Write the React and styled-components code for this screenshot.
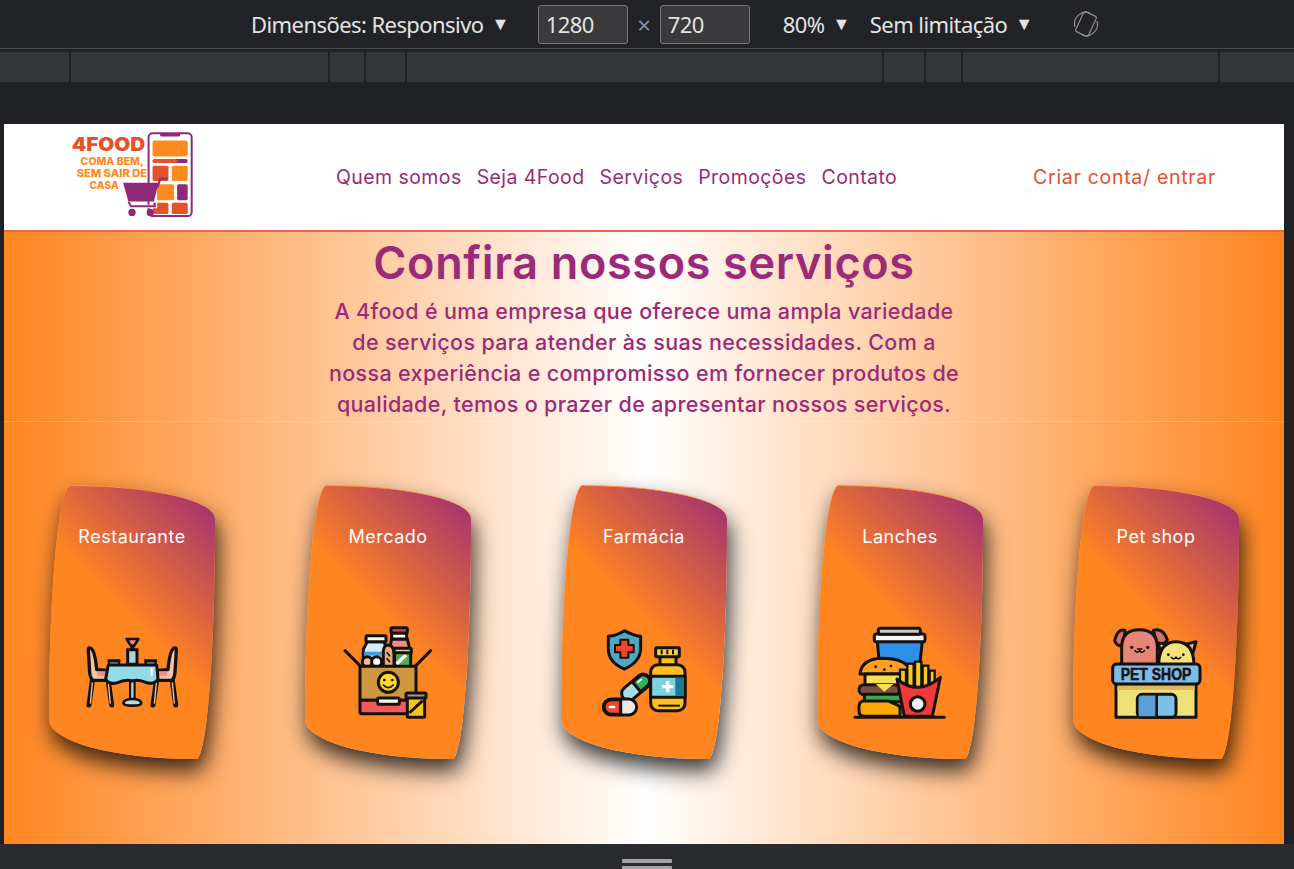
import React from "react";
import styled, { createGlobalStyle } from "styled-components";

const purple = "#9b2a78";
const red = "#e4512b";
const orange = "#ff8520";
const ink = "#14110f";

const GlobalStyle = createGlobalStyle`
  html, body {
    margin: 0;
    padding: 0;
    background: #202124;
    overflow: hidden;
  }
`;

const Screen = styled.div`
  width: 1294px;
  height: 869px;
  overflow: hidden;
  display: flex;
  flex-direction: column;
  background: #202124;
  font-family: "Inter", "Liberation Sans", sans-serif;
`;

const Toolbar = styled.div`
  height: 49px;
  display: flex;
  align-items: center;
  padding-left: 251px;
  box-sizing: border-box;
  background: #222326;
  border-bottom: 1px solid #4a4b50;
  font-family: "Noto Sans", "Open Sans", sans-serif;
  font-size: 22px;
  letter-spacing: -0.57px;
  color: #e3e3e3;
  flex: none;
`;

const ToolLabel = styled.span`
  margin-left: ${({ $left }) => $left || 0}px;
  white-space: nowrap;
`;

const Caret = styled.span`
  font-size: 18px;
  margin-left: 8px;
  vertical-align: 3px;
`;

const SizeInput = styled.div`
  width: 90px;
  height: 39px;
  margin-left: ${({ $left }) => $left || 0}px;
  padding-left: 7px;
  box-sizing: border-box;
  display: flex;
  align-items: center;
  background: #3a3a3c;
  border: 1px solid #77787c;
  border-radius: 3px;
`;

const Times = styled.span`
  width: 32px;
  text-align: center;
  color: #7f93b4;
  font-size: 24px;
`;

const RotateIcon = styled.svg`
  margin-left: 39px;
  flex: none;
`;

const Ruler = styled.div`
  flex: none;
  display: flex;
  gap: 2px;
  height: 30px;
  margin-top: 3px;
`;

const RulerPart = styled.div`
  flex: ${({ $w }) => ($w ? `0 0 ${$w}px` : "1")};
  background: #35363a;
`;

const Stage = styled.div`
  flex: none;
  padding: 42px 10px 0 4px;
`;

const Page = styled.div`
  width: 1280px;
  height: 720px;
  display: flex;
  flex-direction: column;
  background: linear-gradient(90deg, ${orange} 0%, #ffffff 50%, ${orange} 100%);
`;

const Header = styled.header`
  flex: none;
  height: 108px;
  box-sizing: border-box;
  display: flex;
  align-items: center;
  padding: 0 68px 0 66px;
  background: #fff;
  border-bottom: 2px solid #e9664a;
`;

const LogoSvg = styled.svg`
  flex: none;
  margin-top: -4px;
`;

const Nav = styled.nav`
  display: flex;
  gap: 15px;
  margin-left: 142px;
`;

const NavLink = styled.a`
  color: ${purple};
  font-size: 19.5px;
  letter-spacing: 0.42px;
  white-space: nowrap;
`;

const AuthLink = styled.a`
  margin-left: auto;
  color: ${red};
  font-size: 19.5px;
  letter-spacing: 0.7px;
  white-space: nowrap;
`;

const Hero = styled.section`
  flex: none;
  height: 189px;
  text-align: center;
  color: ${purple};
`;

const Title = styled.h1`
  margin: 0;
  padding-top: 3px;
  font-size: 45px;
  line-height: 55px;
  font-weight: 600;
  letter-spacing: 0.65px;
`;

const Intro = styled.p`
  margin: 6px 0 0;
  font-size: 21.5px;
  line-height: 31px;
  font-weight: 500;
  letter-spacing: 0.35px;
`;

const Services = styled.section`
  flex: 1;
  display: grid;
  grid-template-columns: repeat(5, 1fr);
  justify-items: center;
  align-items: start;
  padding-top: 63px;
  border-top: 1px solid rgba(255, 255, 255, 0.22);
`;

const Card = styled.article`
  width: 166px;
  height: 274px;
  box-sizing: border-box;
  display: flex;
  flex-direction: column;
  align-items: center;
  padding-top: 39px;
  border-top: 1px solid #ff8f2e;
  background: linear-gradient(45deg, ${orange} 50%, ${purple} 100%);
  border-radius: 22px 146px 19px 146px / 236px 34px 238px 40px;
  box-shadow: 3px 12px 22px rgba(0, 0, 0, 0.78);
`;

const CardTitle = styled.h2`
  margin: 0;
  font-size: 18px;
  line-height: 24px;
  font-weight: 400;
  color: #fff;
  letter-spacing: 0.5px;
  white-space: nowrap;
`;

const CardIcon = styled.svg`
  margin-top: 70px;
  flex: none;
`;

const BottomBar = styled.div`
  flex: 1;
  display: flex;
  flex-direction: column;
  align-items: center;
  background: #2a2b2f;
  padding-top: 15px;
  gap: 3px;
`;

const Handle = styled.div`
  flex: none;
  width: 50px;
  height: 4px;
  background: #a3a3a5;
  border-radius: 1px;
`;

function Logo() {
  return (
    <LogoSvg width="124" height="88" viewBox="58 20 374 264">
      <rect x="295" y="26" width="130" height="250" rx="12" fill="#fff" stroke="#8f2a78" strokeWidth="6" />
      <rect x="330" y="25" width="60" height="11" rx="4" fill="#8f2a78" />
      <rect x="307" y="48" width="106" height="48" rx="6" fill="#ff8a20" />
      <rect x="307" y="104" width="106" height="12" rx="6" fill="#8f2a78" />
      <rect x="307" y="104" width="76" height="12" rx="6" fill={red} />
      <rect x="307" y="124" width="48" height="46" rx="5" fill={red} />
      <rect x="365" y="124" width="48" height="46" rx="5" fill="#ff8a20" />
      <rect x="320" y="180" width="52" height="48" rx="5" fill="#ff8a20" />
      <rect x="381" y="180" width="32" height="48" rx="5" fill="#8f2a78" />
      <rect x="308" y="236" width="47" height="34" rx="5" fill={red} />
      <rect x="365" y="236" width="48" height="34" rx="5" fill={red} />
      <g fontFamily="Inter, sans-serif" fontWeight="800" fontSize="31" fill="#ff8a20" textAnchor="middle">
        <text x="185" y="122" textLength="190" lengthAdjust="spacingAndGlyphs">COMA BEM,</text>
        <text x="184" y="158" textLength="212" lengthAdjust="spacingAndGlyphs">SEM SAIR DE</text>
        <text x="161" y="193" textLength="88" lengthAdjust="spacingAndGlyphs">CASA</text>
      </g>
      <path d="M218 175 H325 L311 232 H234 Z" fill="#8f2a78" />
      <path d="M322 190 L330 163 H352" fill="none" stroke="#8f2a78" strokeWidth="6" />
      <path d="M232 232 L240 247 H316 V235" fill="none" stroke="#fff" strokeWidth="10" />
      <path d="M234 232 L242 246 H314 V236" fill="none" stroke="#8f2a78" strokeWidth="6" />
      <circle cx="245" cy="265" r="11" fill="#8f2a78" />
      <circle cx="300" cy="265" r="11" fill="#8f2a78" />
      <text x="174" y="79" textAnchor="middle" textLength="222" lengthAdjust="spacingAndGlyphs" fontFamily="Inter, sans-serif" fontWeight="900" fontSize="56" fill={red}>4FOOD</text>
    </LogoSvg>
  );
}

function Chair() {
  return (
    <g>
      <path d="M52 155 L42 228 M100 158 L110 228" stroke={ink} strokeWidth="15" strokeLinecap="round" fill="none" />
      <path d="M52 160 L46 224 M100 162 L106 224" stroke="#f6c4a4" strokeWidth="4" fill="none" />
      <path d="M40 62 Q40 54 48 58 Q60 66 65 122 L97 124 V154 H55 Q46 150 44 130 Z" fill="#f6c4a4" stroke={ink} strokeWidth="10" strokeLinejoin="round" />
      <rect x="67" y="127" width="29" height="14" fill="#ee8f8f" />
    </g>
  );
}

function RestaurantIcon() {
  return (
    <CardIcon width="110" height="110" viewBox="6 -30 330 330">
      <Chair />
      <g transform="translate(344 0) scale(-1 1)"><Chair /></g>
      <path d="M172 155 V212" stroke={ink} strokeWidth="20" />
      <path d="M172 155 V212" stroke="#a9d4dc" strokeWidth="7" />
      <path d="M145 222 Q148 210 172 210 Q196 210 199 222 Q199 230 172 230 Q145 230 145 222 Z" fill="#b9dde4" stroke={ink} strokeWidth="8" />
      <path d="M158 62 H186 V106 H158 Z" fill="#a9d4dc" stroke={ink} strokeWidth="9" />
      <path d="M155 30 H190 L178 50 H167 Z" fill="#ef8a8a" stroke={ink} strokeWidth="8" strokeLinejoin="round" />
      <path d="M172 48 V64" stroke={ink} strokeWidth="12" />
      <path d="M98 95 H136 M208 95 H246" stroke={ink} strokeWidth="8" />
      <path d="M102 97 H132 V108 H102 Z M212 97 H242 V108 H212 Z" fill="#a9d4dc" stroke={ink} strokeWidth="7" />
      <path d="M100 108 H245 L249 150 Q240 167 215 161 Q190 150 172 156 Q150 150 125 162 Q100 167 92 150 Z" fill="#93dbe9" stroke={ink} strokeWidth="9" strokeLinejoin="round" />
      <rect x="227" y="116" width="6" height="26" rx="3" fill="#fff" />
    </CardIcon>
  );
}

function MarketIcon() {
  const line = { stroke: ink, strokeWidth: 9, strokeLinejoin: "round" };
  return (
    <CardIcon width="110" height="110" viewBox="9 0 330 330">
      <path d="M185 60 H232 L238 85 V140 H180 V85 Z" fill="#f08a8a" {...line} />
      <rect x="185" y="42" width="45" height="18" fill="#fff" {...line} />
      <rect x="183" y="26" width="49" height="16" rx="4" fill="#e2453a" {...line} />
      <path d="M112 68 H162 L170 90 V145 H100 V90 Z" fill="#d7eef8" {...line} />
      <rect x="108" y="50" width="60" height="18" rx="3" fill="#f2f7fa" {...line} />
      <rect x="102" y="98" width="66" height="12" fill="#3f9fe0" />
      <circle cx="112" cy="128" r="15" fill="#f5b99a" {...line} />
      <circle cx="140" cy="128" r="15" fill="#fff" {...line} />
      <path d="M160 145 V95 Q162 78 175 78 Q190 80 192 100 V145 Z" fill="#e8a878" {...line} />
      <path d="M170 100 L180 112 M170 118 L180 130" stroke={ink} strokeWidth="5" />
      <rect x="194" y="100" width="48" height="45" fill="#4fae4f" {...line} />
      <path d="M200 135 L228 108" stroke="#fff" strokeWidth="10" />
      <rect x="192" y="88" width="52" height="13" rx="3" fill="#d8c8a0" {...line} />
      <path d="M45 95 L92 142 M302 95 L255 142" stroke={ink} strokeWidth="9" strokeLinecap="round" />
      <rect x="90" y="142" width="168" height="102" fill="#cf9840" {...line} />
      <rect x="90" y="244" width="168" height="40" rx="4" fill="#ef5b5b" {...line} />
      <rect x="143" y="237" width="65" height="19" rx="4" fill="#fff" {...line} />
      <circle cx="175" cy="190" r="30" fill="#ffd92b" {...line} />
      <circle cx="163" cy="183" r="4" fill={ink} />
      <circle cx="187" cy="183" r="4" fill={ink} />
      <path d="M160 198 Q175 214 190 198" fill="none" stroke={ink} strokeWidth="5" strokeLinecap="round" />
      <rect x="232" y="235" width="52" height="60" rx="3" fill="#f5c518" {...line} />
      <path d="M238 282 L278 245" stroke={ink} strokeWidth="9" />
      <rect x="228" y="222" width="60" height="15" rx="3" fill="#9a9a96" {...line} />
    </CardIcon>
  );
}

function PharmacyIcon() {
  const line = { stroke: ink, strokeWidth: 9, strokeLinejoin: "round" };
  return (
    <CardIcon width="110" height="110" viewBox="-3 0 330 330">
      <path d="M103 35 Q130 50 152 52 V90 Q150 130 103 150 Q55 130 55 90 V52 Q80 50 103 35 Z" fill="#4ea8bf" {...line} />
      <path d="M91 62 H115 V78 H131 V100 H115 V116 H91 V100 H75 V78 H91 Z" fill="#f0452b" {...line} strokeWidth="6" />
      <g transform="rotate(-40 138 205)">
        <rect x="88" y="184" width="100" height="42" rx="21" fill="#a8dfe6" {...line} />
        <path d="M140 186 H167 A19 19 0 0 1 167 224 H140 Z" fill="#2fae5e" {...line} />
        <rect x="150" y="194" width="18" height="6" rx="3" fill="#fff" />
      </g>
      <rect x="40" y="240" width="100" height="48" rx="24" fill="#e8e8e8" {...line} />
      <path d="M92 242 H64 A22 22 0 0 0 64 286 H92 Z" fill="#ee4a30" {...line} />
      <rect x="56" y="260" width="20" height="8" rx="4" fill="#fff" />
      <rect x="210" y="112" width="48" height="28" fill="#ffc01f" {...line} />
      <rect x="197" y="86" width="71" height="27" rx="3" fill="#f5ce5a" {...line} />
      <path d="M215 92 V106 M232 92 V106 M249 92 V106" stroke={ink} strokeWidth="6" />
      <rect x="182" y="137" width="103" height="138" rx="22" fill="#ffc01f" {...line} />
      <rect x="182" y="172" width="103" height="63" fill="#7dd4dc" {...line} />
      <rect x="256" y="176" width="25" height="55" fill="#1c7a9c" />
      <path d="M233 186 V220 M216 203 H250" stroke="#fff" strokeWidth="10" />
      <path d="M205 260 H270" stroke={ink} strokeWidth="6" />
    </CardIcon>
  );
}

function SnackIcon() {
  const line = { stroke: ink, strokeWidth: 9, strokeLinejoin: "round" };
  return (
    <CardIcon width="110" height="110" viewBox="0 0 330 330">
      <path d="M97 66 H232 L222 160 H105 Z" fill="#2f8fe8" {...line} />
      <rect x="88" y="45" width="152" height="23" rx="6" fill="#f5f5f5" {...line} />
      <rect x="100" y="28" width="126" height="18" rx="6" fill="#c9c9c9" {...line} />
      <path d="M45 165 Q50 120 110 118 Q190 118 200 165 Z" fill="#ffa01f" {...line} />
      <circle cx="92" cy="143" r="4" fill={ink} />
      <circle cx="118" cy="152" r="4" fill={ink} />
      <circle cx="138" cy="141" r="4" fill={ink} />
      <rect x="60" y="165" width="110" height="35" fill="#f5e050" {...line} />
      <rect x="42" y="197" width="122" height="30" rx="15" fill="#7a5040" {...line} />
      <path d="M92 195 L118 218 L146 195 Z" fill="#f5e050" />
      <rect x="58" y="226" width="112" height="22" fill="#3fa84f" {...line} />
      <path d="M42 262 Q42 246 58 246 H130 L165 262 V292 H58 Q42 292 42 276 Z" fill="#ffa800" {...line} />
      <g fill="#ffc81f" stroke={ink} strokeWidth="7">
        <rect x="165" y="152" width="18" height="60" />
        <rect x="187" y="134" width="19" height="80" />
        <rect x="210" y="128" width="19" height="85" />
        <rect x="233" y="140" width="17" height="70" />
        <rect x="254" y="155" width="15" height="50" />
      </g>
      <path d="M156 180 L178 292 H262 L286 175 Q250 205 220 205 Q185 205 156 180 Z" fill="#f03b3b" {...line} />
      <circle cx="218" cy="255" r="22" fill="#eef2f5" {...line} />
      <path d="M30 295 H298" stroke={ink} strokeWidth="9" strokeLinecap="round" />
    </CardIcon>
  );
}

function PetIcon() {
  const line = { stroke: ink, strokeWidth: 9, strokeLinejoin: "round" };
  return (
    <CardIcon width="110" height="110" viewBox="3 0 330 330">
      <path d="M75 34 Q52 28 44 66 Q54 88 72 76 Z" fill="#d96e62" {...line} />
      <path d="M160 34 Q190 26 202 62 Q190 82 170 72 Z" fill="#d96e62" {...line} />
      <path d="M65 140 V85 Q65 32 118 32 Q172 32 172 85 V140 Z" fill="#e58578" {...line} />
      <circle cx="95" cy="85" r="5" fill={ink} />
      <circle cx="143" cy="85" r="5" fill={ink} />
      <path d="M105 95 Q112 104 119 95 Q126 104 133 95 M113 90 H125" fill="none" stroke={ink} strokeWidth="5" strokeLinecap="round" />
      <path d="M174 72 L202 74 L184 105 Z" fill="#e8b860" {...line} />
      <path d="M256 76 L288 68 L278 106 Z" fill="#e8b860" {...line} />
      <path d="M176 140 Q176 68 228 68 Q282 68 282 140 Z" fill="#f5e27a" {...line} />
      <circle cx="205" cy="107" r="4" fill={ink} />
      <circle cx="250" cy="107" r="4" fill={ink} />
      <path d="M214 115 Q221 124 228 115 Q235 124 242 115" fill="none" stroke={ink} strokeWidth="5" strokeLinecap="round" />
      <rect x="48" y="195" width="240" height="100" fill="#f0e07a" {...line} />
      <rect x="52" y="199" width="232" height="14" fill="#e0b860" />
      <rect x="112" y="226" width="116" height="69" rx="14" fill="#7cc0e8" {...line} />
      <path d="M116 238 Q116 230 126 230 H170 V292 H116 Z" fill="#5a9fd8" />
      <path d="M170 228 V295" stroke={ink} strokeWidth="8" />
      <rect x="38" y="135" width="262" height="60" rx="12" fill="#7cbde8" {...line} />
      <text x="168" y="183" textAnchor="middle" textLength="212" lengthAdjust="spacingAndGlyphs" fontFamily="'Liberation Sans', sans-serif" fontWeight="700" fontSize="48" fill={ink} stroke={ink} strokeWidth="1.5">PET SHOP</text>
    </CardIcon>
  );
}

const services = [
  { name: "Restaurante", Icon: RestaurantIcon },
  { name: "Mercado", Icon: MarketIcon },
  { name: "Farmácia", Icon: PharmacyIcon },
  { name: "Lanches", Icon: SnackIcon },
  { name: "Pet shop", Icon: PetIcon },
];

const navLinks = ["Quem somos", "Seja 4Food", "Serviços", "Promoções", "Contato"];
const rulerParts = [69, 257, 34, 39, 475, 40, 35, 255, 0];

export default function App() {
  return (
    <Screen>
      <GlobalStyle />
      <Toolbar>
        <ToolLabel>Dimensões: Responsivo<Caret>▼</Caret></ToolLabel>
        <SizeInput $left={29}>1280</SizeInput>
        <Times>×</Times>
        <SizeInput>720</SizeInput>
        <ToolLabel $left={33}>80%<Caret>▼</Caret></ToolLabel>
        <ToolLabel $left={20}>Sem limitação<Caret>▼</Caret></ToolLabel>
        <RotateIcon width="28" height="28" viewBox="0 0 28 28" fill="none" stroke="#8f8f8f" strokeWidth="1.2">
          <rect x="7" y="3" width="14" height="22" rx="2" transform="rotate(25 14 14)" />
          <path d="M3 17 A11.5 11.5 0 0 1 18 3 M25 11 A11.5 11.5 0 0 1 10 25" />
        </RotateIcon>
      </Toolbar>

      <Ruler>
        {rulerParts.map((w, i) => (
          <RulerPart key={i} $w={w} />
        ))}
      </Ruler>

      <Stage>
        <Page>
          <Header>
            <Logo />
            <Nav>
              {navLinks.map((link) => (
                <NavLink key={link}>{link}</NavLink>
              ))}
            </Nav>
            <AuthLink>Criar conta/ entrar</AuthLink>
          </Header>

          <Hero>
            <Title>Confira nossos serviços</Title>
            <Intro>
              A 4food é uma empresa que oferece uma ampla variedade
              <br />
              de serviços para atender às suas necessidades. Com a
              <br />
              nossa experiência e compromisso em fornecer produtos de
              <br />
              qualidade, temos o prazer de apresentar nossos serviços.
            </Intro>
          </Hero>

          <Services>
            {services.map(({ name, Icon }) => (
              <Card key={name}>
                <CardTitle>{name}</CardTitle>
                <Icon />
              </Card>
            ))}
          </Services>
        </Page>
      </Stage>

      <BottomBar>
        <Handle />
        <Handle />
      </BottomBar>
    </Screen>
  );
}
